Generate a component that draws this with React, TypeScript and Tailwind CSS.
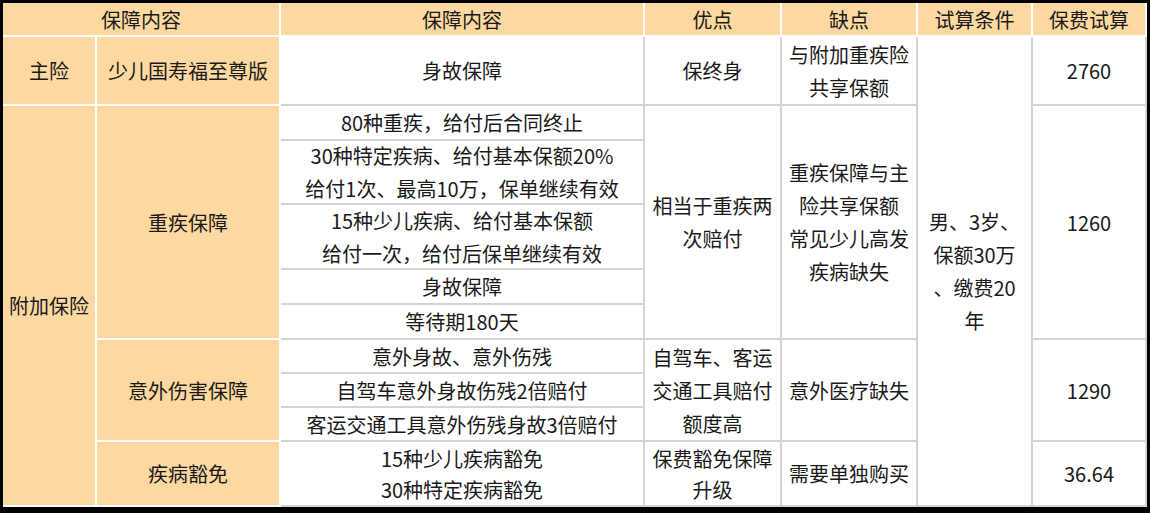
import React from 'react'

// 保障方案对比表（Excel 截图样式）
function Cell({
  pos,
  orange = false,
  tall = false,
  children,
}: {
  pos: string
  orange?: boolean
  tall?: boolean
  children: React.ReactNode
}) {
  return (
    <div
      className={`${pos} flex items-center justify-center text-center border-r-2 border-b-2 ${
        orange ? 'bg-[#fdd8a0] border-white' : 'bg-white border-[#d4d4d4]'
      } ${tall ? 'leading-[31px]' : 'leading-[33px]'}`}
    >
      <div>{children}</div>
    </div>
  )
}

export default function App() {
  return (
    <div
      className="w-[1150px] h-[513px] bg-black pt-[3px] pl-[3px] pr-[3px] pb-[6px] text-[20px] text-[#1a1a1a]"
      style={{ fontFamily: '"Noto Sans CJK SC", "Noto Sans", sans-serif' }}
    >
      <div className="grid bg-white w-[1144px] h-[504px] grid-cols-[94px_184px_364px_137px_136px_115px_114px] grid-rows-[34px_69px_35px_64px_65px_35px_35px_34px_34px_34px_65px]">
        {/* Header */}
        <Cell pos="col-start-1 col-span-2 row-start-1" orange>保障内容</Cell>
        <Cell pos="col-start-3 row-start-1" orange>保障内容</Cell>
        <Cell pos="col-start-4 row-start-1" orange>优点</Cell>
        <Cell pos="col-start-5 row-start-1" orange>缺点</Cell>
        <Cell pos="col-start-6 row-start-1" orange>试算条件</Cell>
        <Cell pos="col-start-7 row-start-1" orange>保费试算</Cell>

        {/* 主险 */}
        <Cell pos="col-start-1 row-start-2" orange>主险</Cell>
        <Cell pos="col-start-2 row-start-2" orange>少儿国寿福至尊版</Cell>
        <Cell pos="col-start-3 row-start-2">身故保障</Cell>
        <Cell pos="col-start-4 row-start-2">保终身</Cell>
        <Cell pos="col-start-5 row-start-2">
          与附加重疾险
          <br />
          共享保额
        </Cell>
        <Cell pos="col-start-6 row-start-2 row-span-10">
          男、3岁、
          <br />
          保额30万
          <br />
          、缴费20
          <br />
          年
        </Cell>
        <Cell pos="col-start-7 row-start-2">2760</Cell>

        {/* 附加保险 */}
        <Cell pos="col-start-1 row-start-3 row-span-9" orange>附加保险</Cell>

        {/* 重疾保障 */}
        <Cell pos="col-start-2 row-start-3 row-span-5" orange>重疾保障</Cell>
        <Cell pos="col-start-3 row-start-3">80种重疾，给付后合同终止</Cell>
        <Cell pos="col-start-3 row-start-4">
          30种特定疾病、给付基本保额20%
          <br />
          给付1次、最高10万，保单继续有效
        </Cell>
        <Cell pos="col-start-3 row-start-5">
          15种少儿疾病、给付基本保额
          <br />
          给付一次，给付后保单继续有效
        </Cell>
        <Cell pos="col-start-3 row-start-6">身故保障</Cell>
        <Cell pos="col-start-3 row-start-7">等待期180天</Cell>
        <Cell pos="col-start-4 row-start-3 row-span-5">
          相当于重疾两
          <br />
          次赔付
        </Cell>
        <Cell pos="col-start-5 row-start-3 row-span-5">
          重疾保障与主
          <br />
          险共享保额
          <br />
          常见少儿高发
          <br />
          疾病缺失
        </Cell>
        <Cell pos="col-start-7 row-start-3 row-span-5">1260</Cell>

        {/* 意外伤害保障 */}
        <Cell pos="col-start-2 row-start-8 row-span-3" orange>意外伤害保障</Cell>
        <Cell pos="col-start-3 row-start-8">意外身故、意外伤残</Cell>
        <Cell pos="col-start-3 row-start-9">自驾车意外身故伤残2倍赔付</Cell>
        <Cell pos="col-start-3 row-start-10">客运交通工具意外伤残身故3倍赔付</Cell>
        <Cell pos="col-start-4 row-start-8 row-span-3">
          自驾车、客运
          <br />
          交通工具赔付
          <br />
          额度高
        </Cell>
        <Cell pos="col-start-5 row-start-8 row-span-3">意外医疗缺失</Cell>
        <Cell pos="col-start-7 row-start-8 row-span-3">1290</Cell>

        {/* 疾病豁免 */}
        <Cell pos="col-start-2 row-start-11" orange>疾病豁免</Cell>
        <Cell pos="col-start-3 row-start-11" tall>
          15种少儿疾病豁免
          <br />
          30种特定疾病豁免
        </Cell>
        <Cell pos="col-start-4 row-start-11" tall>
          保费豁免保障
          <br />
          升级
        </Cell>
        <Cell pos="col-start-5 row-start-11">需要单独购买</Cell>
        <Cell pos="col-start-7 row-start-11">36.64</Cell>
      </div>
    </div>
  )
}
